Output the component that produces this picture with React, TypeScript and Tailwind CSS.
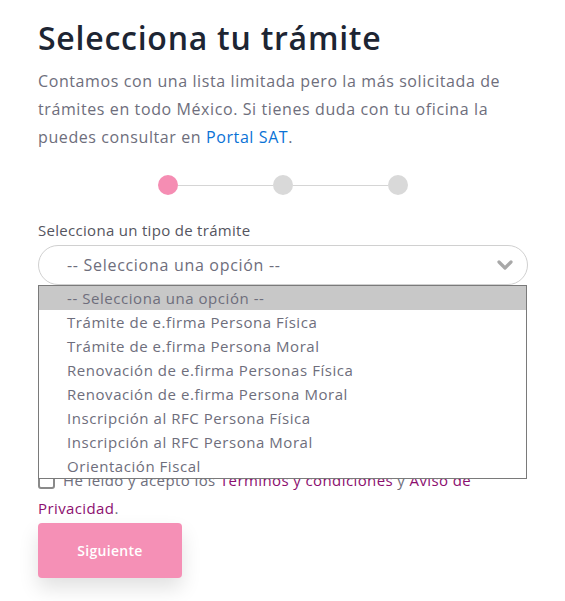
import { useState } from "react";

const opciones = [
  "Trámite de e.firma Persona Física",
  "Trámite de e.firma Persona Moral",
  "Renovación de e.firma Personas Física",
  "Renovación de e.firma Persona Moral",
  "Inscripción al RFC Persona Física",
  "Inscripción al RFC Persona Moral",
  "Orientación Fiscal",
];

const App = () => {
  const [open] = useState(true);

  return (
    <div className="min-h-[601px] bg-white font-['Open_Sans',sans-serif]">
      <div className="w-[490px] ml-[38px] pt-[17px]">
        {/* Header */}
        <h1 className="text-[32px] leading-[42px] font-semibold text-[#1d2533] tracking-[0.75px]">
          Selecciona tu trámite
        </h1>
        <p className="mt-[8px] text-[16px] leading-[28px] text-[#6e6e7c] tracking-[0.6px]">
          Contamos con una lista limitada pero la más solicitada de trámites
          en todo México. Si tienes duda con tu oficina la puedes consultar en{" "}
          <a href="#" className="text-[#0a72d6]">
            Portal SAT
          </a>
          .
        </p>

        {/* Stepper */}
        <div className="mt-[24px] flex items-center ml-[120px] w-[250px]">
          <span className="w-[20px] h-[20px] rounded-full bg-[#f58db3]" />
          <span className="flex-1 h-px bg-[#d5d5d5]" />
          <span className="w-[20px] h-[20px] rounded-full bg-[#d9d9d9]" />
          <span className="flex-1 h-px bg-[#d5d5d5]" />
          <span className="w-[20px] h-[20px] rounded-full bg-[#d9d9d9]" />
        </div>

        {/* Select */}
        <label className="block mt-[24px] text-[15px] leading-[22px] text-[#555560] tracking-[0.3px]">
          Selecciona un tipo de trámite
        </label>
        <div className="relative mt-[4px]">
          <div className="h-[40px] rounded-full border border-[#d0d0d0] flex items-center justify-between pl-[28px] pr-[14px]">
            <span className="text-[16px] text-[#6e6e7c] tracking-[0.7px]">-- Selecciona una opción --</span>
            <svg width="16" height="12" viewBox="0 0 16 12" fill="none">
              <path d="M2 3l6 6 6-6" stroke="#a8a8a8" strokeWidth="3.2" strokeLinecap="round" strokeLinejoin="round" />
            </svg>
          </div>
          {open && (
            <ul className="absolute left-0 right-[1px] top-[40px] z-10 bg-white border border-[#7a7a7a] text-[15px] leading-[24px] text-[#6e6e7c] tracking-[0.55px]">
              <li className="pl-[28px] bg-[#c8c8c8]">-- Selecciona una opción --</li>
              {opciones.map((o) => (
                <li key={o} className="pl-[28px]">
                  {o}
                </li>
              ))}
            </ul>
          )}
        </div>

        {/* Terms */}
        <p className="mt-[181px] text-[15px] leading-[28px] text-[#6e6e7c] tracking-[0.4px]">
          <span className="inline-block align-[-3px] mr-[8px] w-[17px] h-[17px] rounded-[3px] border-2 border-[#8a8a8a]" />
          He leído y acepto los{" "}
          <a href="#" className="text-[#8c0f6f]">
            Términos y condiciones
          </a>{" "}
          y{" "}
          <a href="#" className="text-[#8c0f6f]">
            Aviso de Privacidad
          </a>
          .
        </p>

        <button className="mt-[1px] w-[144px] h-[55px] rounded-[4px] bg-[#f590b6] text-white text-[14px] font-semibold tracking-[0.3px] shadow-[0_10px_20px_rgba(0,0,0,0.12)]">
          Siguiente
        </button>
      </div>
    </div>
  );
};

export default App;
